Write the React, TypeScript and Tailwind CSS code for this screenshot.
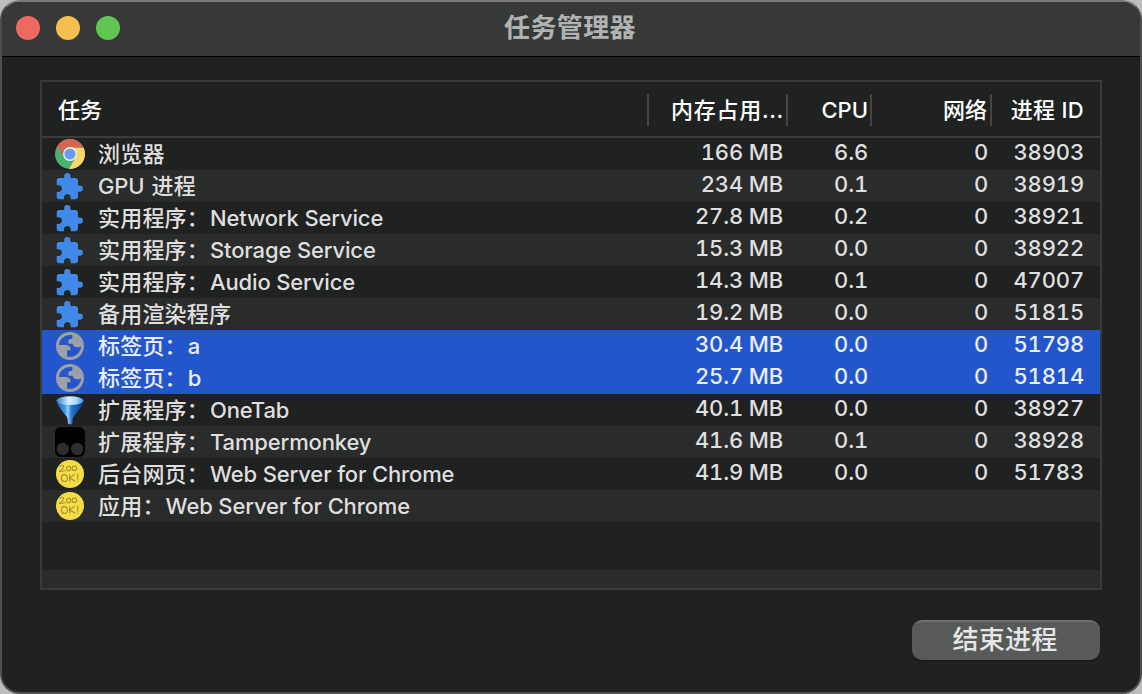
import React from "react";

type IconKind = "chrome" | "puzzle" | "globe" | "funnel" | "monkey" | "ok";

interface Task {
  icon: IconKind;
  zh: string;
  latin?: string;
  latinFirst?: boolean;
  mem?: string;
  cpu?: string;
  net?: string;
  pid?: string;
  selected?: boolean;
}

const tasks: Task[] = [
  { icon: "chrome", zh: "浏览器", mem: "166 MB", cpu: "6.6", net: "0", pid: "38903" },
  { icon: "puzzle", zh: "进程", latin: "GPU", latinFirst: true, mem: "234 MB", cpu: "0.1", net: "0", pid: "38919" },
  { icon: "puzzle", zh: "实用程序：", latin: "Network Service", mem: "27.8 MB", cpu: "0.2", net: "0", pid: "38921" },
  { icon: "puzzle", zh: "实用程序：", latin: "Storage Service", mem: "15.3 MB", cpu: "0.0", net: "0", pid: "38922" },
  { icon: "puzzle", zh: "实用程序：", latin: "Audio Service", mem: "14.3 MB", cpu: "0.1", net: "0", pid: "47007" },
  { icon: "puzzle", zh: "备用渲染程序", mem: "19.2 MB", cpu: "0.0", net: "0", pid: "51815" },
  { icon: "globe", zh: "标签页：", latin: "a", mem: "30.4 MB", cpu: "0.0", net: "0", pid: "51798", selected: true },
  { icon: "globe", zh: "标签页：", latin: "b", mem: "25.7 MB", cpu: "0.0", net: "0", pid: "51814", selected: true },
  { icon: "funnel", zh: "扩展程序：", latin: "OneTab", mem: "40.1 MB", cpu: "0.0", net: "0", pid: "38927" },
  { icon: "monkey", zh: "扩展程序：", latin: "Tampermonkey", mem: "41.6 MB", cpu: "0.1", net: "0", pid: "38928" },
  { icon: "ok", zh: "后台网页：", latin: "Web Server for Chrome", mem: "41.9 MB", cpu: "0.0", net: "0", pid: "51783" },
  { icon: "ok", zh: "应用：", latin: "Web Server for Chrome" },
];

function TaskIcon({ kind }: { kind: IconKind }) {
  return (
    <svg viewBox="0 0 30 30" className="size-[30px] shrink-0">
      {kind === "chrome" && (
        <g>
          <circle cx="15" cy="15" r="15" fill="#4caf73" />
          <path d="M2.01 7.5A15 15 0 0 1 27.99 7.5L28.6 8.7H15L8.9 17.2Z" fill="#d8654f" />
          <path d="M15 8.7H28.6A15 15 0 0 1 14 29.97L20.8 18.2Z" fill="#fbd668" />
          <circle cx="15" cy="15" r="6.9" fill="#f4f6f5" />
          <circle cx="15" cy="15" r="5.6" fill="#6a9cf1" />
        </g>
      )}
      {kind === "puzzle" && (
        <path
          transform="translate(-.8 .7) scale(1.25)"
          fill="#4189e8"
          d="M20.5 11H19V7c0-1.1-.9-2-2-2h-4V3.5a2.5 2.5 0 0 0-5 0V5H4c-1.1 0-1.99.9-1.99 2v3.8H3.5c1.49 0 2.7 1.21 2.7 2.7s-1.21 2.7-2.7 2.7H2V20c0 1.1.9 2 2 2h3.8v-1.5c0-1.49 1.21-2.7 2.7-2.7s2.7 1.21 2.7 2.7V22H17c1.1 0 2-.9 2-2v-4h1.5a2.5 2.5 0 0 0 0-5z"
        />
      )}
      {kind === "globe" && (
        <g>
          <circle cx="15" cy="15" r="14" fill="#9ba1a6" />
          <path
            fill="#2456cb"
            d="M17.3 4.2C10.6 2.9 4.4 7.6 3.9 14H10.2C13.2 14 15.6 15.6 15.6 18.4V19.3H12V25.5C19.6 27.4 26 21.8 26 14.9C25 16.2 23.6 16.6 22 16.2L19.6 15.5C18.2 15.1 17.9 13.8 17.9 12.8H13.4V9.8C13.4 8.6 14.2 7.9 15.4 7.9H17.3Z"
          />
        </g>
      )}
      {kind === "funnel" && (
        <g>
          <defs>
            <linearGradient id="cone" x1="0" x2="1">
              <stop offset="0" stopColor="#1a5fb0" />
              <stop offset=".3" stopColor="#3f98e6" />
              <stop offset=".42" stopColor="#8fd0fb" />
              <stop offset=".56" stopColor="#2473cc" />
              <stop offset="1" stopColor="#0c3f8a" />
            </linearGradient>
            <linearGradient id="rim" x1="0" x2="1">
              <stop offset="0" stopColor="#2f7fce" />
              <stop offset=".45" stopColor="#d9f1ff" />
              <stop offset=".75" stopColor="#a5d6fa" />
              <stop offset="1" stopColor="#3f8ddb" />
            </linearGradient>
          </defs>
          <path d="M1.6 5.5C1.8 10 8 17 11.6 21.5C12.7 23 12.8 25 13 28.6Q15.3 30.2 17.4 28.6C17.5 25 17.6 23 18.7 21.5C22.2 17 28.2 10 28.4 5.5Z" fill="url(#cone)" />
          <ellipse cx="15" cy="5.6" rx="13.4" ry="4.4" fill="url(#rim)" />
        </g>
      )}
      {kind === "monkey" && (
        <g>
          <rect width="30" height="30" rx="6" fill="#000" />
          <circle cx="7.8" cy="22" r="6.2" fill="#2c2e2d" />
          <circle cx="22.2" cy="22" r="6.2" fill="#2c2e2d" />
        </g>
      )}
      {kind === "ok" && (
        <g>
          <circle cx="15" cy="15" r="14" fill="#f7dd45" />
          <g fill="none" stroke="#a39034" strokeWidth="1.05" strokeLinecap="round" strokeLinejoin="round">
            <path d="M5 7.6C6 5.4 9 5.9 8.4 8.2C7.9 10 6 11.4 4.5 12.4L10.2 11.7" />
            <ellipse cx="13.6" cy="9.6" rx="2.1" ry="2.3" />
            <ellipse cx="19.4" cy="9.2" rx="2.3" ry="2.3" />
            <ellipse cx="9.4" cy="19" rx="3" ry="3.4" />
            <path d="M14.6 15.4V22.2M19.4 15.4L14.9 19L20 22.3M22.8 15V20.2M22.8 22V22.4" />
          </g>
        </g>
      )}
    </svg>
  );
}

const num = "pb-[3px] text-right text-[22px] leading-[29px] tabular-nums tracking-[-0.15px]";

function Row({ task, odd }: { task: Task; odd: boolean }) {
  const bg = task.selected
    ? "bg-[#2456cb] text-[#e9eefa]"
    : odd
      ? "bg-[#2a2c2b] text-[#dfdfdf]"
      : "bg-[#202221] text-[#dfdfdf]";
  return (
    <div className={`grid h-8 grid-cols-[607px_139px_84px_120px_108px] font-[450] ${bg}`}>
      <div className="flex items-center pl-[13px]">
        <TaskIcon kind={task.icon} />
        <div className="ml-[13px] flex items-baseline whitespace-pre text-[22px] leading-8">
          {task.latinFirst && <span className="mr-[7px] tracking-[-0.1px]">{task.latin}</span>}
          <span className="tracking-[0.2px]">{task.zh}</span>
          {!task.latinFirst && task.latin && <span className="ml-[1px] tracking-[-0.15px]">{task.latin}</span>}
        </div>
      </div>
      <div className={`${num} pr-[5px]`}>{task.mem}</div>
      <div className={`${num} pr-[4px]`}>{task.cpu}</div>
      <div className={`${num} pr-[4px]`}>{task.net}</div>
      <div className={`${num} pr-[16px]`}>{task.pid}</div>
    </div>
  );
}

function HeadCell({ label, pad }: { label: string; pad: string }) {
  return <div className={`h-8 text-right text-[22px] leading-8 ${pad}`}>{label}</div>;
}

export default function App() {
  return (
    <div className="h-[694px] w-[1142px] overflow-hidden bg-[#bdbdbd] font-['Inter','Noto_Sans_CJK_SC',sans-serif]">
      <div className="flex h-full flex-col overflow-hidden rounded-[20px] border-2 border-[#4e504f] border-t-[#777978] bg-[#202221]">
        <header className="grid h-[55px] shrink-0 grid-cols-[1fr_auto_1fr] items-center border-b border-black bg-[#373938] px-[14px] pb-[2px]">
          <div className="flex gap-4">
            <span className="size-6 rounded-full bg-[#ed6a5e]" />
            <span className="size-6 rounded-full bg-[#f5bf4f]" />
            <span className="size-6 rounded-full bg-[#61c554]" />
          </div>
          <h1 className="pr-[2px] text-[26px] leading-8 font-bold tracking-[0.4px] text-[#b1b3b2]">任务管理器</h1>
          <div />
        </header>
        <main className="flex flex-1 flex-col px-[38px] pt-[23px]">
          <section className="h-[510px] border-2 border-[#393b3a] bg-[#202221]">
            <div className="grid h-14 grid-cols-[607px_139px_84px_120px_108px] border-b-2 border-[#3a3c3b] pt-3 font-medium text-white">
              <div className="h-8 border-r-2 border-[#444645] pl-4 text-[22px] leading-8">任务</div>
              <HeadCell label="内存占用..." pad="border-r-2 border-[#444645] pr-[2px] tracking-[0.7px]" />
              <HeadCell label="CPU" pad="border-r-2 border-[#444645] pr-[2px]" />
              <HeadCell label="网络" pad="border-r-2 border-[#444645] pr-[3px]" />
              <HeadCell label="进程 ID" pad="pr-[16px] tracking-[0.3px]" />
            </div>
            {tasks.map((t, i) => (
              <Row key={i} task={t} odd={i % 2 === 1} />
            ))}
            <div className="h-12" />
            <div className="h-[18px] bg-[#2a2c2b]" />
          </section>
          <div className="mt-[30px] flex justify-end pr-[2px]">
            <button className="h-10 w-[188px] rounded-[10px] border-t-2 border-[#707271] bg-[#585a59] pr-[2px] pb-[3px] text-[26px] leading-[35px] font-[450] tracking-[0.3px] text-[#e6e6e6] shadow-[0_1px_2px_rgba(0,0,0,0.35)]">
              结束进程
            </button>
          </div>
        </main>
      </div>
    </div>
  );
}
